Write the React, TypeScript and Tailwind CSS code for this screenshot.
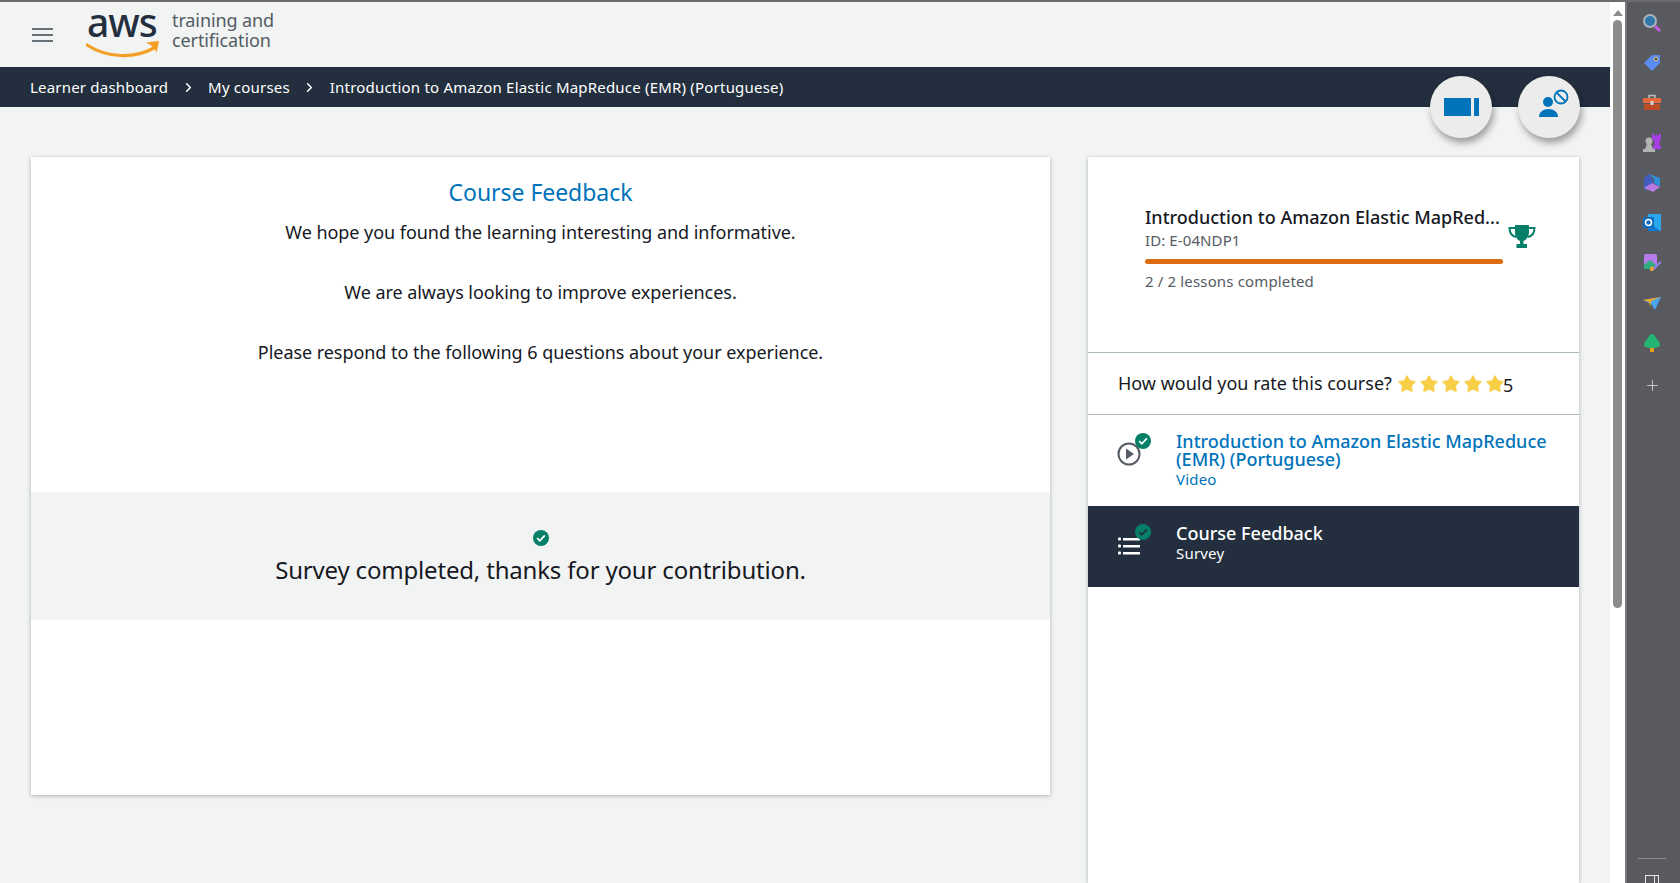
import { ChevronRight, Plus, Star } from "lucide-react";

const font = { fontFamily: '"Noto Sans", "Open Sans", sans-serif' };

const CheckBadge = ({ size = 16, dark = false }: { size?: number; dark?: boolean }) => (
  <svg width={size} height={size} viewBox="0 0 16 16">
    <circle cx="8" cy="8" r="8" fill="#067f68" />
    <path d="M4.2 8.2l2.6 2.6 5-5.4" fill="none" stroke={dark ? "#232f3e" : "#fff"} strokeWidth="1.8" />
  </svg>
);

const Logo = () => (
  <div className="flex items-start">
    <div className="relative w-[76px] h-[64px]">
      <span className="absolute left-[1px] top-[1px] text-[39px] leading-[36px] font-medium tracking-[-1px] text-[#232f3e]">aws</span>
      <svg className="absolute left-0 top-[33px]" width="76" height="24" viewBox="0 0 76 24">
        <path d="M1 9c20 13 47 14 67 3" fill="none" stroke="#f49f25" strokeWidth="3.2" strokeLinecap="round" />
        <path d="M60 6.5l13-1.5-2.5 12c-1-3.5-2.5-6.5-10.5-10.5z" fill="#f49f25" />
      </svg>
    </div>
    <div className="ml-[10px] mt-[8px] text-[18px] tracking-[-0.1px] text-[#545b64]">
      <div className="leading-[19px]">training and</div>
      <div className="leading-[20px]">certification</div>
    </div>
  </div>
);

const Crumb = ({ label }: { label: string }) => <span className="whitespace-nowrap">{label}</span>;

const FloatButtons = () => (
  <div className="absolute left-[1430px] top-[74px] flex gap-[26px]">
    <button className="w-[62px] h-[62px] rounded-full bg-[#ececec] shadow-[2px_5px_7px_rgba(0,0,0,0.35)] flex items-center justify-center">
      <svg className="ml-[2px]" width="36" height="18" viewBox="0 0 36 18">
        <rect x="0" y="0" width="27" height="18" fill="#0073bb" />
        <rect x="30" y="0" width="5" height="18" fill="#0073bb" />
      </svg>
    </button>
    <button className="w-[62px] h-[62px] rounded-full bg-[#ececec] shadow-[2px_5px_7px_rgba(0,0,0,0.35)] flex items-center justify-center">
      <svg width="40" height="40" viewBox="0 0 40 40">
        <circle cx="19" cy="15" r="5" fill="#0073bb" />
        <path d="M10 30c0-5 4-8 9.5-8s9.5 3 9.5 8z" fill="#0073bb" />
        <circle cx="32" cy="10" r="6.5" fill="none" stroke="#0073bb" strokeWidth="1.8" />
        <path d="M27.5 5.5l9 9" stroke="#0073bb" strokeWidth="1.8" />
      </svg>
    </button>
  </div>
);

const LeftCard = () => (
  <section className="w-[1019px] h-[638px] bg-white flex flex-col shadow-[0_1px_4px_rgba(0,28,36,0.3)]">
    <div className="h-[335px] pt-[17px] flex flex-col items-center text-[18px] leading-[30px] tracking-[-0.05px] text-[#16191f]">
      <h1 className="text-[23px] leading-[36px] text-[#0073bb]">Course Feedback</h1>
      <p className="mt-[7px]">We hope you found the learning interesting and informative.</p>
      <p className="mt-[30px]">We are always looking to improve experiences.</p>
      <p className="mt-[30px]">Please respond to the following 6 questions about your experience.</p>
    </div>
    <div className="h-[128px] bg-[#f2f3f3] flex flex-col items-center pt-[38px]">
      <CheckBadge />
      <p className="mt-[6px] text-[24px] leading-[36px] tracking-[-0.18px] text-[#16191f]">Survey completed, thanks for your contribution.</p>
    </div>
  </section>
);

const Stars = () => (
  <span className="flex items-center gap-[2px] ml-[5px]">
    {[0, 1, 2, 3, 4].map((i) => (
      <Star key={i} size={20} fill="#f7ce46" stroke="#f7ce46" strokeWidth={1} />
    ))}
  </span>
);

const Trophy = () => (
  <svg width="28" height="24" viewBox="0 0 28 24">
    <path d="M7 0h14v7c0 5-3 8-5.5 9v3h3.5v4H8.5v-4H12v-3C9.5 15 7 12 7 7z" fill="#067f68" />
    <path d="M7 3H1.5c0 5 2.5 8 6.5 9M21 3h5.5c0 5-2.5 8-6.5 9" fill="none" stroke="#067f68" strokeWidth="2" />
  </svg>
);

const RightCard = () => (
  <aside className="w-[491px] h-[726px] bg-white shadow-[0_1px_4px_rgba(0,28,36,0.3)]">
    <div className="h-[196px] border-b border-[#aab7b8] pl-[57px] pt-[48px] relative">
      <div className="w-[360px] text-[18px] leading-[24px] font-medium text-[#16191f] truncate">
        Introduction to Amazon Elastic MapRed...
      </div>
      <div className="text-[15px] leading-[22px] tracking-[0.1px] text-[#545b64]">ID: E-04NDP1</div>
      <div className="w-[358px] h-[5px] rounded-full bg-[#dd6b10] mt-[8px]" />
      <div className="mt-[6px] text-[15px] leading-[22px] tracking-[0.15px] text-[#545b64]">2 / 2 lessons completed</div>
      <div className="absolute left-[420px] top-[68px]">
        <Trophy />
      </div>
    </div>
    <div className="h-[62px] border-b border-[#aab7b8] pl-[30px] flex items-center text-[18px] text-[#16191f]">
      <span>How would you rate this course?</span>
      <Stars />
      <span className="mt-[3px] ml-[-2px]">5</span>
    </div>
    <div className="h-[91px] flex items-start pl-[29px] pt-[17px]">
      <div className="relative w-[28px] h-[36px] mr-[31px] mt-[4px]">
        <svg className="absolute left-0 top-[6px]" width="24" height="24" viewBox="0 0 24 24">
          <circle cx="12" cy="12" r="10.5" fill="none" stroke="#545b64" strokeWidth="2" />
          <path d="M9 6.5l8 5.5-8 5.5z" fill="#545b64" />
        </svg>
        <div className="absolute left-[18px] top-[-3px]"><CheckBadge /></div>
      </div>
      <div className="text-[#0073bb]">
        <div className="text-[18px] leading-[18px] font-medium w-[380px]">
          Introduction to Amazon Elastic MapReduce (EMR) (Portuguese)
        </div>
        <div className="text-[15px] leading-[22px] tracking-[0.2px]">Video</div>
      </div>
    </div>
    <div className="h-[81px] bg-[#232f3e] text-white flex items-start pl-[30px] pt-[15px]">
      <div className="relative w-[28px] h-[36px] mr-[30px]">
        <svg className="absolute left-0 top-[16px]" width="24" height="18" viewBox="0 0 24 18">
          <g fill="#fff">
            <rect x="0" y="0.5" width="3" height="3" rx="1" />
            <rect x="5" y="1" width="17" height="2.5" />
            <rect x="0" y="7.5" width="3" height="3" rx="1" />
            <rect x="5" y="8" width="17" height="2.5" />
            <rect x="0" y="14.5" width="3" height="3" rx="1" />
            <rect x="5" y="15" width="17" height="2.5" />
          </g>
        </svg>
        <div className="absolute left-[17px] top-[3px]"><CheckBadge dark /></div>
      </div>
      <div>
        <div className="text-[18px] leading-[24px] font-medium">Course Feedback</div>
        <div className="text-[15px] leading-[17px] tracking-[0.2px]">Survey</div>
      </div>
    </div>
  </aside>
);

const EdgeIcons = () => (
  <div className="flex flex-col items-center gap-[20px] pt-[11px] pr-[3px]">
    <svg width="20" height="20" viewBox="0 0 20 20">
      <circle cx="8" cy="8" r="6" fill="#2f76ab" stroke="#a9b4bc" strokeWidth="2" />
      <path d="M13 13l5 5" stroke="#c95de8" strokeWidth="3" />
    </svg>
    <svg width="20" height="20" viewBox="0 0 20 20">
      <path d="M10 2h8v8l-8 8-8-8z" fill="#5b8cf5" />
      <circle cx="14" cy="6" r="1.8" fill="#2e4a8c" stroke="#f2c230" />
    </svg>
    <svg width="20" height="20" viewBox="0 0 20 20">
      <path d="M7 5V2.5h6V5" fill="none" stroke="#b9bcc0" strokeWidth="1.5" />
      <rect x="1" y="5" width="18" height="5" fill="#e8683a" />
      <rect x="2" y="11" width="16" height="6" fill="#bf4b28" />
      <rect x="8.5" y="8" width="3" height="4" fill="#d5d5d5" />
    </svg>
    <svg width="20" height="20" viewBox="0 0 20 20">
      <circle cx="7" cy="8" r="3.5" fill="#b3b3b3" />
      <path d="M5 11h4l2 5H3zM1 16h12v3H1z" fill="#b3b3b3" />
      <path d="M10 1h2v2h1.5V1H15v2h1.5V1H19v5l-1.5 2v5H19v3h-8v-3h1.5V8L10 6z" fill="#a83ee8" />
    </svg>
    <svg width="20" height="20" viewBox="0 0 20 20">
      <path d="M7 1l11 4v9l-6-4V6z" fill="#2f8fd8" />
      <path d="M2 5l5-4 5 9-7 5v3l-3-2z" fill="#3f5fc0" />
      <path d="M2 15l8-5 8 4-7 5z" fill="#b67ae0" />
    </svg>
    <svg width="20" height="20" viewBox="0 0 20 20">
      <rect x="6" y="1" width="13" height="17" fill="#28a8ea" />
      <path d="M6 10l13 8H6z" fill="#0f78d4" />
      <rect x="1" y="4" width="11" height="11" rx="1" fill="#0f6cbd" />
      <circle cx="6.5" cy="9.5" r="3" fill="none" stroke="#fff" strokeWidth="1.5" />
    </svg>
    <svg width="20" height="20" viewBox="0 0 20 20">
      <rect x="2" y="1" width="13" height="14" rx="1.5" fill="#b47ce8" />
      <path d="M2 12l6-5 6 5-4 4H2z" fill="#2fae7e" />
      <path d="M10 16l8-8 1.5 1.5-8 8z" fill="#8a80f0" />
      <path d="M8 15l2-2 2 2-1 3H8z" fill="#e8a030" />
    </svg>
    <svg width="20" height="20" viewBox="0 0 20 20">
      <path d="M1 7l18-3-6 13-4-6z" fill="#4aa5ee" />
      <path d="M1 7l18-3-10 4-1 6-1-5z" fill="#f2a81d" />
    </svg>
    <svg width="20" height="20" viewBox="0 0 20 20">
      <path d="M10 1c2 0 3 2 4 4 2 2 4 5 4 7 0 2-3 3-8 3s-8-1-8-3c0-2 2-5 4-7 1-2 2-4 4-4z" fill="#22b573" />
      <rect x="8" y="15" width="4" height="4" fill="#e89c1c" />
    </svg>
    <Plus size={17} strokeWidth={1} className="text-[#f0f0f0] mt-[4px]" />
  </div>
);

export default function App() {
  return (
    <div className="relative w-[1680px] h-[883px] overflow-hidden flex border-t-2 border-[#6b6c70] bg-[#f2f3f3]" style={font}>
      <main className="w-[1610px] flex flex-col">
        <header className="h-[65px] flex items-center pl-[32px]">
          <svg className="mr-[33px]" width="21" height="16" viewBox="0 0 21 16">
            <g fill="#687078">
              <rect y="1" width="21" height="2" />
              <rect y="7" width="21" height="2" />
              <rect y="13" width="21" height="2" />
            </g>
          </svg>
          <Logo />
        </header>
        <nav className="h-[40px] bg-[#232f3e] text-white text-[15px] tracking-[0.2px] flex items-center pl-[30px]">
          <Crumb label="Learner dashboard" />
          <ChevronRight size={15} strokeWidth={2.5} className="mx-[12.5px]" />
          <Crumb label="My courses" />
          <ChevronRight size={15} strokeWidth={2.5} className="mx-[12.5px]" />
          <Crumb label="Introduction to Amazon Elastic MapReduce (EMR) (Portuguese)" />
        </nav>
        <div className="flex items-start pl-[31px] pt-[50px] gap-[38px]">
          <LeftCard />
          <RightCard />
        </div>
      </main>
      <FloatButtons />
      <div className="w-[15px] h-full bg-white flex flex-col items-center">
        <div className="mt-[8px] w-0 h-0 border-x-[5px] border-x-transparent border-b-[6px] border-b-[#8c8c8c]" />
        <div className="mt-[4px] w-[9px] h-[588px] rounded-full bg-[#8c8c8c]" />
      </div>
      <div className="w-[55px] h-full bg-[#595a5f] border-l-2 border-[#77787c] flex flex-col">
        <EdgeIcons />
        <div className="mt-auto flex flex-col items-center pr-[3px]">
          <div className="w-[28px] h-px bg-[#8d8e92]" />
          <div className="mt-[16px] mb-[-8px] w-[14px] h-[16px] border border-[#e5e5e5] flex justify-end">
            <div className="w-[4px] border-l border-[#e5e5e5]" />
          </div>
        </div>
      </div>
    </div>
  );
}
